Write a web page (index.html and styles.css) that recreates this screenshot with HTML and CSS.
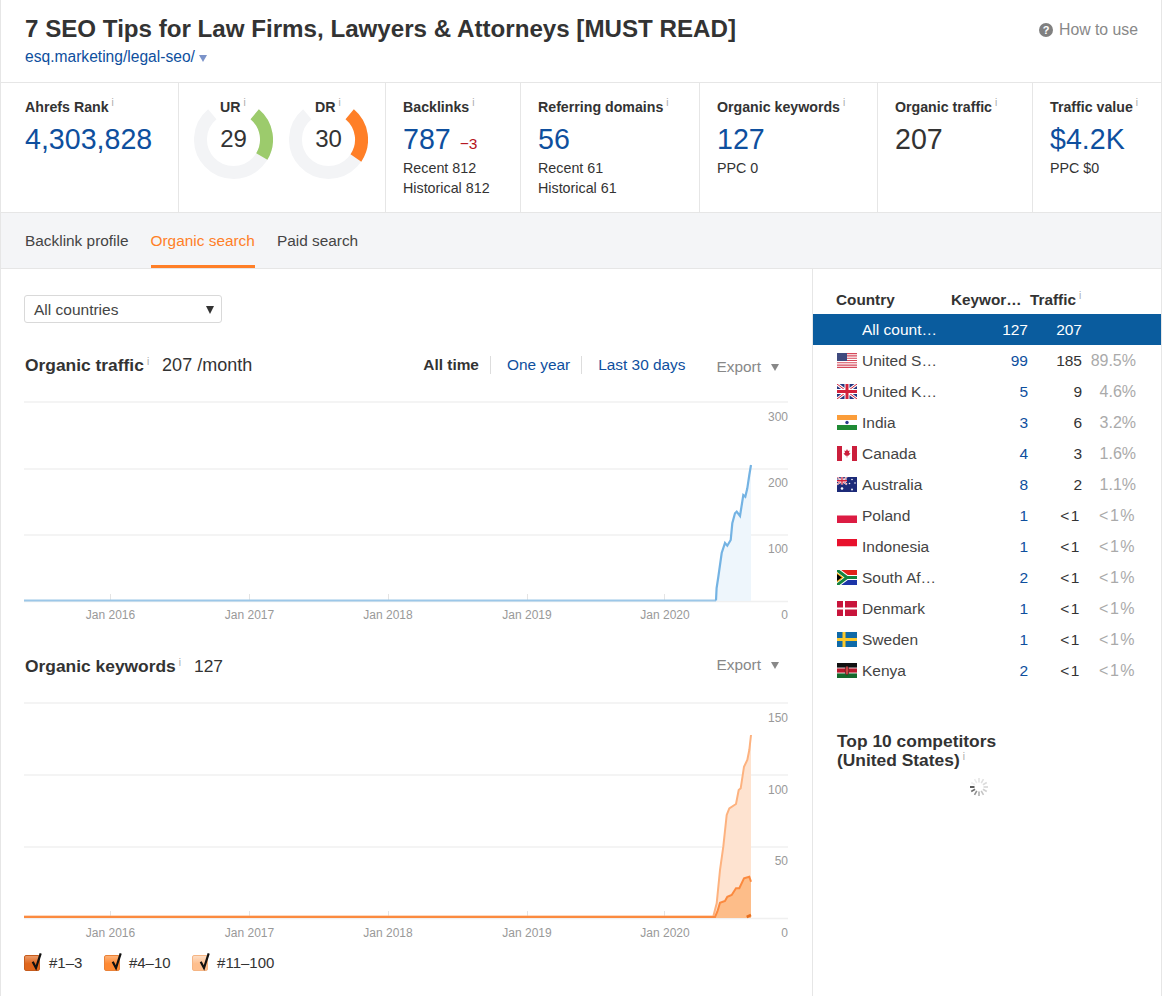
FILE: index.html
```html
<!DOCTYPE html>
<html lang="en">
<head>
  <meta charset="UTF-8" />
  <title>Site Explorer</title>
  <link rel="stylesheet" href="styles.css">
</head>
<body>
<div class="page">

  <div class="top">
    <div>
      <h1>7 SEO Tips for Law Firms, Lawyers &amp; Attorneys [MUST READ]</h1>
      <a class="url">esq.marketing/legal-seo/<span class="url-arrow"></span></a>
    </div>
    <div class="how-to">
      <svg class="help" viewBox="0 0 14 14"><circle cx="7" cy="7" r="7" fill="#808080"/><text x="7" y="10.8" text-anchor="middle" class="help-q">?</text></svg>
      How to use
    </div>
  </div>

  <div class="stats">
    <div class="stat first">
      <div class="label">Ahrefs Rank<sup>i</sup></div>
      <div class="value blue">4,303,828</div>
    </div>
    <div class="stat gauges">
      <div class="gauge">
        <div class="gauge-label">UR<sup>i</sup></div>
        <svg viewBox="0 0 79 79" width="79" height="79">
          <path d="M18.3 14.2A33 33 0 1 0 60.7 14.2" class="track"/>
          <path d="M60.7 14.2A33 33 0 0 1 67.8 56.5" fill="none" stroke="#9ccb6c" stroke-width="13"/>
        </svg>
        <div class="gauge-num">29</div>
      </div>
      <div class="gauge">
        <div class="gauge-label">DR<sup>i</sup></div>
        <svg viewBox="0 0 79 79" width="79" height="79">
          <path d="M18.3 14.2A33 33 0 1 0 60.7 14.2" class="track"/>
          <path d="M60.7 14.2A33 33 0 0 1 66.9 58" fill="none" stroke="#ff7f27" stroke-width="13"/>
        </svg>
        <div class="gauge-num">30</div>
      </div>
    </div>
    <div class="stat">
      <div class="label">Backlinks<sup>i</sup></div>
      <div class="value blue">787<span class="delta">&minus;3</span></div>
      <div class="sub">Recent 812</div>
      <div class="sub">Historical 812</div>
    </div>
    <div class="stat">
      <div class="label">Referring domains<sup>i</sup></div>
      <div class="value blue">56</div>
      <div class="sub">Recent 61</div>
      <div class="sub">Historical 61</div>
    </div>
    <div class="stat">
      <div class="label">Organic keywords<sup>i</sup></div>
      <div class="value blue">127</div>
      <div class="sub">PPC 0</div>
    </div>
    <div class="stat">
      <div class="label">Organic traffic<sup>i</sup></div>
      <div class="value">207</div>
    </div>
    <div class="stat last">
      <div class="label">Traffic value<sup>i</sup></div>
      <div class="value blue">$4.2K</div>
      <div class="sub">PPC $0</div>
    </div>
  </div>

  <div class="tabs">
    <a class="tab">Backlink profile</a>
    <a class="tab active">Organic search</a>
    <a class="tab">Paid search</a>
  </div>

  <div class="main">
    <div class="left">
      <div class="select">All countries<span class="select-arrow"></span></div>

      <div class="chart-head first-head">
        <b>Organic traffic</b><sup>i</sup><span class="chart-num">207 /month</span>
        <div class="ranges">
          <span class="range current">All time</span>
          <a class="range">One year</a>
          <a class="range">Last 30 days</a>
        </div>
        <div class="export">Export<span class="export-arrow"></span></div>
      </div>
      <svg class="chart" viewBox="24 400 766 225" width="766" height="225">
        <g class="grid">
          <line x1="24" x2="788" y1="402" y2="402"/>
          <line x1="24" x2="788" y1="469" y2="469"/>
          <line x1="24" x2="788" y1="535" y2="535"/>
          <line x1="24" x2="788" y1="601.5" y2="601.5"/>
        </g>
        <g class="ticks">
          <line x1="110.5" x2="110.5" y1="594" y2="601"/>
          <line x1="249.5" x2="249.5" y1="594" y2="601"/>
          <line x1="388.5" x2="388.5" y1="594" y2="601"/>
          <line x1="527.5" x2="527.5" y1="594" y2="601"/>
          <line x1="664.5" x2="664.5" y1="594" y2="601"/>
        </g>
        <path d="M716 600L716 588L718.3 577L720 565L721.7 553L725 543L727.3 545.7L730.7 540L732.3 523.3L735 513.3L736.7 511.7L740 516L743.3 495L745.3 496.7L747.3 488.3L749.3 475L751 465L751 601L716 601Z" fill="#eef6fc"/>
        <path d="M24 600.5L716 600.5" fill="none" stroke="#9cc7e8" stroke-width="2"/>
        <path d="M716 600.5L716.6 588L718.3 577L720 565L721.7 553L725 543L727.3 545.7L730.7 540L732.3 523.3L735 513.3L736.7 511.7L740 516L743.3 495L745.3 496.7L747.3 488.3L749.3 475L751 465" fill="none" stroke="#74b3e3" stroke-width="2.2"/>
        <g class="axis">
          <text x="110.5" y="619" text-anchor="middle">Jan 2016</text>
          <text x="249.5" y="619" text-anchor="middle">Jan 2017</text>
          <text x="388" y="619" text-anchor="middle">Jan 2018</text>
          <text x="527" y="619" text-anchor="middle">Jan 2019</text>
          <text x="665" y="619" text-anchor="middle">Jan 2020</text>
          <text x="788" y="421" text-anchor="end">300</text>
          <text x="788" y="487" text-anchor="end">200</text>
          <text x="788" y="553" text-anchor="end">100</text>
          <text x="788" y="619" text-anchor="end">0</text>
        </g>
      </svg>

      <div class="chart-head second-head">
        <b>Organic keywords</b><sup>i</sup><span class="chart-num small">127</span>
        <div class="export">Export<span class="export-arrow"></span></div>
      </div>
      <svg class="chart" viewBox="24 700 766 245" width="766" height="245">
        <g class="grid">
          <line x1="24" x2="788" y1="703" y2="703"/>
          <line x1="24" x2="788" y1="775" y2="775"/>
          <line x1="24" x2="788" y1="847" y2="847"/>
          <line x1="24" x2="788" y1="918.5" y2="918.5"/>
        </g>
        <g class="ticks">
          <line x1="110.5" x2="110.5" y1="911" y2="918"/>
          <line x1="249.5" x2="249.5" y1="911" y2="918"/>
          <line x1="388.5" x2="388.5" y1="911" y2="918"/>
          <line x1="527.5" x2="527.5" y1="911" y2="918"/>
          <line x1="664.5" x2="664.5" y1="911" y2="918"/>
        </g>
        <path d="M713.3 917L716.7 903.3L720 870L723.3 846.7L726.7 815L729.3 808.3L736 804L738.7 790L740.7 788.3L744 766.7L747.3 760L749.3 750L751 735L751 918L713.3 918Z" fill="#fee3d0"/>
        <path d="M715 917L717.3 911.7L720 902.7L725 901L727.3 896.7L731.7 895L736 888.3L739.3 888.3L744 878.3L749.3 876.7L751 881.7L751 918L715 918Z" fill="#fdbd89"/>
        <path d="M24 916.5L713.3 916.5L716.7 903.3L720 870L723.3 846.7L726.7 815L729.3 808.3L736 804L738.7 790L740.7 788.3L744 766.7L747.3 760L749.3 750L751 735" fill="none" stroke="#fdb27f" stroke-width="2"/>
        <path d="M24 917L715 917L717.3 911.7L720 902.7L725 901L727.3 896.7L731.7 895L736 888.3L739.3 888.3L744 878.3L749.3 876.7L751 881.7" fill="none" stroke="#fb8a3f" stroke-width="2"/>
        <path d="M746.7 917L751 915" fill="none" stroke="#e8701f" stroke-width="2.5"/>
        <g class="axis">
          <text x="110.5" y="937" text-anchor="middle">Jan 2016</text>
          <text x="249.5" y="937" text-anchor="middle">Jan 2017</text>
          <text x="388" y="937" text-anchor="middle">Jan 2018</text>
          <text x="527" y="937" text-anchor="middle">Jan 2019</text>
          <text x="665" y="937" text-anchor="middle">Jan 2020</text>
          <text x="788" y="722" text-anchor="end">150</text>
          <text x="788" y="794" text-anchor="end">100</text>
          <text x="788" y="865" text-anchor="end">50</text>
          <text x="788" y="937" text-anchor="end">0</text>
        </g>
      </svg>

      <div class="legend">
        <span class="legend-item"><span class="check c1"><svg viewBox="0 0 18 22" width="18" height="22"><path d="M8.7 11.7L12 18L16.7 3.3" class="tick"/></svg></span>#1–3</span>
        <span class="legend-item"><span class="check c2"><svg viewBox="0 0 18 22" width="18" height="22"><path d="M8.7 11.7L12 18L16.7 3.3" class="tick"/></svg></span>#4–10</span>
        <span class="legend-item"><span class="check c3"><svg viewBox="0 0 18 22" width="18" height="22"><path d="M8.7 11.7L12 18L16.7 3.3" class="tick"/></svg></span>#11–100</span>
      </div>
    </div>

    <div class="side">
      <div class="thead">
        <b class="th-country">Country</b>
        <b class="th-keywords">Keywords</b>
        <b class="th-traffic">Traffic<sup>i</sup></b>
      </div>

      <div class="row selected">
        <span></span><span class="name">All countries</span><span class="num">127</span><span class="num">207</span><span></span>
      </div>
      <div class="row">
        <svg class="flag" viewBox="0 0 20 15"><rect width="20" height="15" fill="#fff"/><path d="M0 .6h20M0 2.9h20M0 5.2h20M0 7.5h20M0 9.8h20M0 12.1h20M0 14.4h20" stroke="#d5485a" stroke-width="1.1"/><rect width="10" height="8" fill="#3f4a7e"/></svg>
        <span class="name">United States</span><a class="num link">99</a><span class="num">185</span><span class="pct">89.5%</span>
      </div>
      <div class="row">
        <svg class="flag" viewBox="0 0 20 15"><rect width="20" height="15" fill="#26367f"/><path d="M0 0L20 15M20 0L0 15" stroke="#fff" stroke-width="3"/><path d="M0 0L20 15M20 0L0 15" stroke="#d3213a" stroke-width="1"/><path d="M10 0V15M0 7.5H20" stroke="#fff" stroke-width="5"/><path d="M10 0V15M0 7.5H20" stroke="#d3213a" stroke-width="3"/></svg>
        <span class="name">United Kingdom</span><a class="num link">5</a><span class="num">9</span><span class="pct">4.6%</span>
      </div>
      <div class="row">
        <svg class="flag" viewBox="0 0 20 15"><rect width="20" height="5" fill="#fb9d3a"/><rect y="5" width="20" height="5" fill="#fff"/><rect y="10" width="20" height="5" fill="#1f8a34"/><circle cx="10" cy="7.5" r="1.7" fill="#2a3a8c"/></svg>
        <span class="name">India</span><a class="num link">3</a><span class="num">6</span><span class="pct">3.2%</span>
      </div>
      <div class="row">
        <svg class="flag" viewBox="0 0 20 15"><rect width="20" height="15" fill="#fff"/><rect width="5" height="15" fill="#cb1f3c"/><rect x="15" width="5" height="15" fill="#cb1f3c"/><path d="M10 3L11 5L12.6 4.6L12 7L13.6 7.6L11 10L10.3 9.6V11.6H9.7V9.6L9 10L6.4 7.6L8 7L7.4 4.6L9 5Z" fill="#cb1f3c"/></svg>
        <span class="name">Canada</span><a class="num link">4</a><span class="num">3</span><span class="pct">1.6%</span>
      </div>
      <div class="row">
        <svg class="flag" viewBox="0 0 20 15"><rect width="20" height="15" fill="#1c2a78"/><path d="M0 0L10 7.5M10 0L0 7.5" stroke="#fff" stroke-width="1.6"/><path d="M0 0L10 7.5M10 0L0 7.5" stroke="#d3213a" stroke-width=".6"/><path d="M5 0V7.5M0 3.75H10" stroke="#fff" stroke-width="2.4"/><path d="M5 0V7.5M0 3.75H10" stroke="#d3213a" stroke-width="1.3"/><g fill="#fff"><circle cx="5" cy="11.5" r="1.3"/><circle cx="15" cy="2.5" r=".8"/><circle cx="12.5" cy="6.5" r=".8"/><circle cx="18" cy="6" r=".8"/><circle cx="15" cy="12.5" r=".9"/></g></svg>
        <span class="name">Australia</span><a class="num link">8</a><span class="num">2</span><span class="pct">1.1%</span>
      </div>
      <div class="row">
        <svg class="flag" viewBox="0 0 20 15"><rect width="20" height="7.5" fill="#fff"/><rect y="7.5" width="20" height="7.5" fill="#dc1c43"/></svg>
        <span class="name">Poland</span><a class="num link">1</a><span class="num lt">&lt;1</span><span class="pct lt">&lt;1%</span>
      </div>
      <div class="row">
        <svg class="flag" viewBox="0 0 20 15"><rect width="20" height="7.5" fill="#e8112d"/><rect y="7.5" width="20" height="7.5" fill="#fff"/></svg>
        <span class="name">Indonesia</span><a class="num link">1</a><span class="num lt">&lt;1</span><span class="pct lt">&lt;1%</span>
      </div>
      <div class="row">
        <svg class="flag" viewBox="0 0 20 15"><rect width="20" height="7.5" fill="#e2231a"/><rect y="7.5" width="20" height="7.5" fill="#1c35a8"/><path d="M0 0L10 7.5L0 15M10 7.5H20" fill="none" stroke="#fff" stroke-width="5"/><path d="M0 0L10 7.5L0 15M10 7.5H20" fill="none" stroke="#15843f" stroke-width="3"/><path d="M0 2.5L6.5 7.5L0 12.5Z" fill="#fcb514"/><path d="M0 4L4.8 7.5L0 11Z" fill="#000"/></svg>
        <span class="name">South Africa</span><a class="num link">2</a><span class="num lt">&lt;1</span><span class="pct lt">&lt;1%</span>
      </div>
      <div class="row">
        <svg class="flag" viewBox="0 0 20 15"><rect width="20" height="15" fill="#c8143b"/><path d="M7 0V15M0 7.5H20" stroke="#fff" stroke-width="2"/></svg>
        <span class="name">Denmark</span><a class="num link">1</a><span class="num lt">&lt;1</span><span class="pct lt">&lt;1%</span>
      </div>
      <div class="row">
        <svg class="flag" viewBox="0 0 20 15"><rect width="20" height="15" fill="#0f6aa8"/><path d="M7 0V15M0 7.5H20" stroke="#fcc92c" stroke-width="3"/></svg>
        <span class="name">Sweden</span><a class="num link">1</a><span class="num lt">&lt;1</span><span class="pct lt">&lt;1%</span>
      </div>
      <div class="row">
        <svg class="flag" viewBox="0 0 20 15"><rect width="20" height="5" fill="#111"/><rect y="5" width="20" height="5" fill="#b8182c"/><rect y="10" width="20" height="5" fill="#14692c"/><path d="M0 5H20M0 10H20" stroke="#fff" stroke-width=".8"/><ellipse cx="10" cy="7.5" rx="1.8" ry="4.6" fill="#c44" stroke="#111" stroke-width=".5"/></svg>
        <span class="name">Kenya</span><a class="num link">2</a><span class="num lt">&lt;1</span><span class="pct lt">&lt;1%</span>
      </div>

      <h3 class="competitors">Top 10 competitors<br>(United States)<sup>i</sup></h3>
      <svg class="spinner" viewBox="0 0 20 20" width="20" height="20">
        <g stroke-width="1.6">
          <line x1="10" y1="1" x2="10" y2="5.5" stroke="#e4e4e4"/>
          <line x1="14.5" y1="2.2" x2="12.2" y2="6.1" stroke="#e0e0e0"/>
          <line x1="17.8" y1="5.5" x2="13.9" y2="7.8" stroke="#dcdcdc"/>
          <line x1="19" y1="10" x2="14.5" y2="10" stroke="#d6d6d6"/>
          <line x1="17.8" y1="14.5" x2="13.9" y2="12.2" stroke="#d0d0d0"/>
          <line x1="14.5" y1="17.8" x2="12.2" y2="13.9" stroke="#c4c4c4"/>
          <line x1="10" y1="19" x2="10" y2="14.5" stroke="#b0b0b0"/>
          <line x1="5.5" y1="17.8" x2="7.8" y2="13.9" stroke="#909090"/>
          <line x1="2.2" y1="14.5" x2="6.1" y2="12.2" stroke="#707070"/>
          <line x1="1" y1="10" x2="5.5" y2="10" stroke="#333"/>
          <line x1="2.2" y1="5.5" x2="6.1" y2="7.8" stroke="#eee"/>
          <line x1="5.5" y1="2.2" x2="7.8" y2="6.1" stroke="#ebebeb"/>
        </g>
      </svg>
    </div>
  </div>
</div>
</body>
</html>
```

FILE: styles.css
```css
body {
  margin: 0;
  background: #fff;
  color: #333;
  font-family: 'Liberation Sans', Arial, sans-serif;
  font-size: 15.5px;
}

a {
  color: #0e4f9e;
  text-decoration: none;
}

sup {
  color: #aaa;
  font-size: 10px;
  font-weight: 400;
  line-height: 0;
  margin-left: 3px;
  vertical-align: 6px;
}

.page {
  width: 1160px;
  min-height: 996px;
  border-left: 1px solid #e6e6e6;
  border-right: 1px solid #e6e6e6;
  display: flex;
  flex-direction: column;
}

/* header */
.top {
  height: 82px;
  box-sizing: border-box;
  padding: 14px 23px 0 24px;
  display: flex;
  justify-content: space-between;
}

h1 {
  margin: 0;
  font-size: 24.15px;
  line-height: 30px;
  font-weight: 700;
}

.url {
  display: block;
  font-size: 15.6px;
  line-height: 20px;
  margin-top: 3px;
}

.url-arrow {
  display: inline-block;
  margin-left: 4px;
  border-left: 4.5px solid transparent;
  border-right: 4.5px solid transparent;
  border-top: 7px solid #7b93c9;
}

.how-to {
  color: #888;
  font-size: 15.8px;
  line-height: 20px;
  padding-top: 6px;
  display: flex;
  gap: 6px;
  align-items: flex-start;
}

.help {
  width: 14px;
  height: 14px;
  margin-top: 3px;
}

.help-q {
  fill: #fff;
  font-size: 11px;
  font-weight: 700;
}

/* metrics */
.stats {
  display: grid;
  grid-template-columns: 178px 207px 135px 179px 178px 155px 128px;
  height: 131px;
  box-sizing: border-box;
  border-top: 1px solid #e6e6e6;
  border-bottom: 1px solid #e6e6e6;
}

.stat {
  border-right: 1px solid #e6e6e6;
  padding: 14px 0 0 17px;
}

.first {
  padding-left: 24px;
}

.last {
  border-right: 0;
}

.label {
  font-size: 14.2px;
  font-weight: 700;
  line-height: 20px;
}

.value {
  font-size: 28.6px;
  line-height: 36px;
  height: 36px;
  margin: 4px 0 1px;
}

.blue {
  color: #0e4f9e;
}

.delta {
  color: #b5121b;
  font-size: 15.5px;
  line-height: 0;
  margin-left: 9px;
}

.sub {
  font-size: 14.3px;
  line-height: 20px;
}

.gauges {
  display: flex;
  gap: 16px;
  padding: 17px 0 0 15px;
}

.gauge {
  position: relative;
  width: 79px;
  height: 79px;
}

.track {
  fill: none;
  stroke: #f3f4f6;
  stroke-width: 13;
}

.gauge-label {
  position: absolute;
  top: -3px;
  left: 26px;
  font-size: 14.2px;
  font-weight: 700;
  line-height: 20px;
}

.gauge-num {
  position: absolute;
  top: 24px;
  left: 0;
  width: 79px;
  text-align: center;
  font-size: 24px;
  line-height: 30px;
}

/* tabs */
.tabs {
  height: 56px;
  box-sizing: border-box;
  background: #f4f5f7;
  border-bottom: 1px solid #e6e6e6;
  padding-left: 24px;
  display: flex;
  gap: 22px;
}

.tab {
  color: #444;
  font-size: 15.4px;
  line-height: 56px;
  height: 55px;
}

.tab.active {
  color: #ff7f27;
  box-shadow: inset 0 -3px 0 #ff7f27;
}

/* main */
.main {
  flex: 1;
  display: flex;
}

.left {
  width: 811px;
  box-sizing: border-box;
  padding: 26px 0 0 23px;
}

.select {
  width: 198px;
  height: 28px;
  box-sizing: border-box;
  border: 1px solid #d9d9d9;
  border-radius: 3px;
  padding: 1px 7px 0 9px;
  line-height: 26px;
  color: #444;
  display: flex;
  justify-content: space-between;
  align-items: center;
}

.select-arrow {
  border-left: 4.5px solid transparent;
  border-right: 4.5px solid transparent;
  border-top: 8px solid #333;
}

.chart-head {
  display: flex;
  align-items: center;
  height: 24px;
  width: 755px;
  box-sizing: border-box;
  padding-left: 1px;
  font-size: 17.4px;
}

.first-head {
  margin-top: 30px;
}

.second-head {
  margin-top: 29px;
}

.chart-head sup {
  margin-top: -6px;
}

.chart-num {
  font-size: 18px;
  margin-left: 13px;
}

.chart-num.small {
  font-size: 17.4px;
  margin-left: 13px;
}

.ranges {
  margin-left: auto;
  display: flex;
  font-size: 15.4px;
}

.range {
  padding: 0 11px 0 16px;
  border-right: 1px solid #ddd;
  line-height: 18px;
}

.range.current {
  font-weight: 700;
  padding-left: 0;
}

.range:last-child {
  border-right: 0;
}

.export {
  color: #888;
  font-size: 15.4px;
  margin: 4px 0 0 20px;
  display: flex;
  align-items: center;
  gap: 10px;
}

.second-head .export {
  margin: 0 0 2px auto;
}

.export-arrow {
  border-left: 4.5px solid transparent;
  border-right: 4.5px solid transparent;
  border-top: 7px solid #888;
}

.chart {
  display: block;
  margin-top: 23px;
}

.second-head + .chart {
  margin-top: 22px;
}

.grid line {
  stroke: #f0f0f0;
  stroke-width: 1.5;
}

.ticks line {
  stroke: #e4e4e4;
  stroke-width: 1;
}

.axis text {
  fill: #999;
  font-size: 12px;
}

.legend {
  display: flex;
  gap: 21.5px;
  margin-top: 8px;
  line-height: 20px;
}

.legend-item {
  display: flex;
  align-items: center;
  gap: 9px;
  font-size: 15px;
}

.check {
  position: relative;
  width: 16px;
  height: 16px;
  box-sizing: border-box;
  border-radius: 2px;
  display: block;
}

.check svg {
  position: absolute;
  left: -1px;
  top: -6px;
  overflow: visible;
}

.tick {
  fill: none;
  stroke: #111;
  stroke-width: 2.2;
}

.c1 {
  background: linear-gradient(#eb9a68, #e0661c 55%);
  border: 1px solid #c65c1d;
}

.c2 {
  background: linear-gradient(#ffb277, #ff8a33 55%);
  border: 1px solid #ea8238;
}

.c3 {
  background: linear-gradient(#fdddc4, #febf8e 55%);
  border: 1px solid #f5b584;
}

/* country table */
.side {
  flex: 1;
  border-left: 1px solid #e6e6e6;
  padding-top: 20px;
}

.thead {
  display: flex;
  height: 25px;
  line-height: 22px;
  padding-left: 23px;
  font-size: 15.3px;
}

.th-country {
  width: 115px;
}

.th-keywords {
  width: 72px;
  margin-right: 7px;
  overflow: hidden;
  white-space: nowrap;
  text-overflow: ellipsis;
}

.row {
  display: grid;
  grid-template-columns: 25px 77px 89px 54px 54px;
  height: 31px;
  align-items: center;
  padding-left: 24px;
}

.row.selected {
  background: #0a5c9e;
  color: #fff;
}

.flag {
  width: 20px;
  height: 15px;
  display: block;
}

.name {
  overflow: hidden;
  white-space: nowrap;
  text-overflow: ellipsis;
  color: #444;
}

.selected .name {
  color: inherit;
}

.num {
  text-align: right;
}

.pct {
  text-align: right;
  color: #aaa;
  font-size: 16px;
}

.lt {
  letter-spacing: 1.5px;
}

.num.lt {
  padding-right: 1px;
}

.competitors {
  margin: 46px 0 0 24px;
  font-size: 17.4px;
  line-height: 19px;
  font-weight: 700;
}

.spinner {
  display: block;
  margin: 7px 0 0 156px;
}
```
